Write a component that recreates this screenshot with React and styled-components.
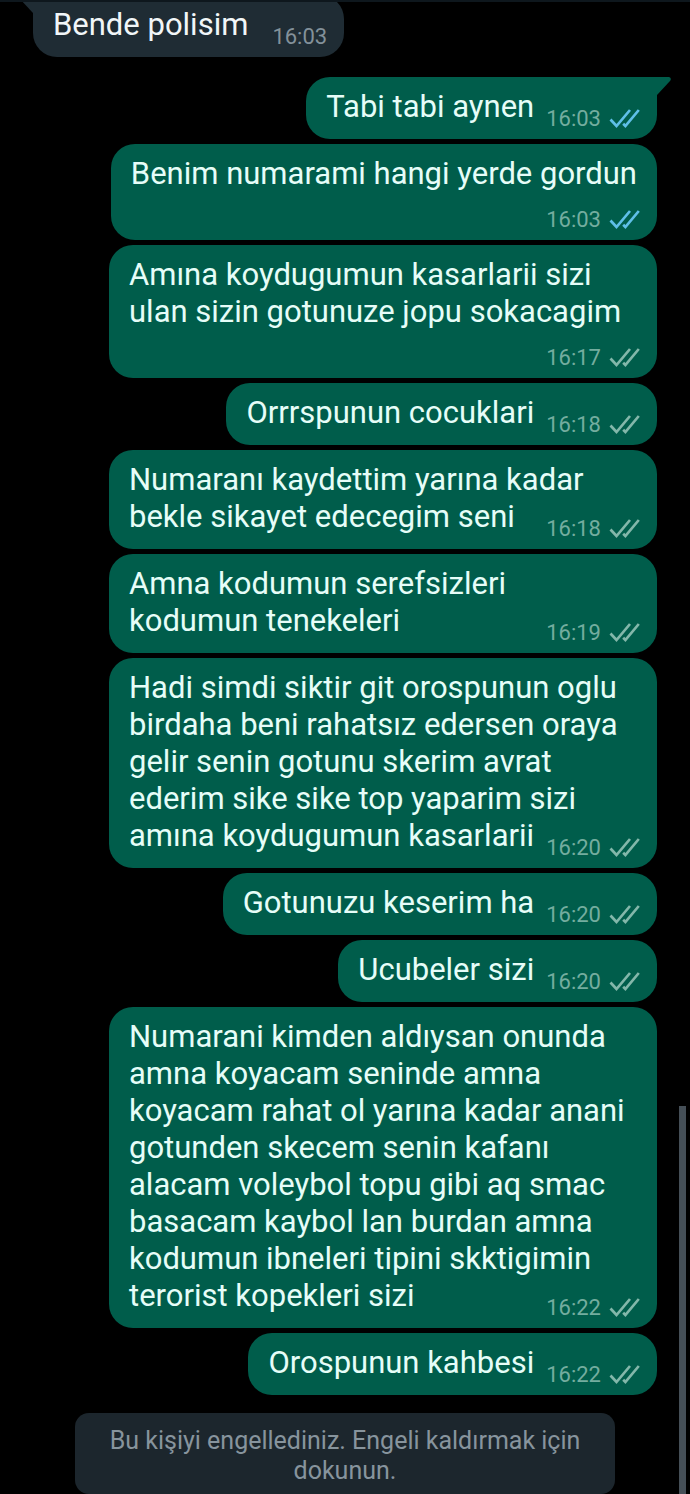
import styled, { createGlobalStyle } from "styled-components";

const GlobalStyle = createGlobalStyle`
  * {
    box-sizing: border-box;
  }
  body {
    margin: 0;
    background: #000;
    font-family: Roboto, "Noto Sans", sans-serif;
  }
`;

const Header = styled.header`
  position: relative;
  z-index: 1;
  height: 2px;
  background: #0e171d;
`;

const Chat = styled.main`
  position: relative;
  overflow: hidden;
`;

const List = styled.ul`
  display: flex;
  flex-direction: column;
  align-items: flex-end;
  gap: 5px;
  list-style: none;
  margin: -7px 0 0;
  padding: 0 33px;
`;

const Bubble = styled.li`
  position: relative;
  display: flow-root;
  max-width: 548px;
  padding: 11px 20px 8px;
  border-radius: 24px;
  background: #005d4b;
  color: #e6fdf8;
  font-size: 31px;
  line-height: 37px;

  ${({ $tail }) => $tail && "border-top-right-radius: 0;"}

  ${({ $incoming }) =>
    $incoming &&
    `
    align-self: flex-start;
    margin-bottom: 15px;
    border-top-left-radius: 0;
    background: #1f2c34;
    color: #f1f6f8;
  `}
`;

const Meta = styled.span`
  display: flex;
  align-items: center;
  gap: 8px;
  height: 24px;
  margin-right: -3px;
  color: ${({ $incoming }) => ($incoming ? "#83919a" : "#74ad9f")};
  font-size: 22px;
  line-height: 24px;

  ${({ $below, $incoming }) =>
    $below
      ? `
    justify-content: flex-end;
    margin-top: 16px;
  `
      : `
    float: right;
    margin-top: 19px;
    margin-left: ${$incoming ? 24 : 12}px;
  `}
`;

const TicksIcon = styled.svg`
  width: 31px;
  height: 24px;
  color: ${({ $read }) => ($read ? "#5fbfe8" : "#83b7aa")};
`;

const Tail = styled.svg`
  position: absolute;
  top: 0;
  width: 14px;
  height: 19px;
  color: ${({ $left }) => ($left ? "#1f2c34" : "#005d4b")};
  ${({ $left }) => ($left ? "right: 100%; transform: scaleX(-1);" : "left: 100%;")}
`;

const BlockedNotice = styled.button`
  display: block;
  width: calc(100% - 150px);
  margin: 18px auto 0;
  padding: 13px 32px 8px;
  border: 0;
  border-radius: 14px;
  background: #1c262d;
  color: #87949d;
  font-family: inherit;
  font-size: 25px;
  line-height: 30px;
  text-align: center;
`;

const ScrollThumb = styled.div`
  position: fixed;
  right: 4px;
  bottom: 0;
  width: 7px;
  height: 26vh;
  background: #454f57;
`;

const messages = [
  { text: "Bende polisim", time: "16:03", incoming: true, tail: true },
  { text: "Tabi tabi aynen", time: "16:03", read: true, tail: true },
  { text: "Benim numarami hangi yerde gordun", time: "16:03", read: true, below: true },
  { text: "Amına koydugumun kasarlarii sizi ulan sizin gotunuze jopu sokacagim", time: "16:17", below: true },
  { text: "Orrrspunun cocuklari", time: "16:18" },
  { text: "Numaranı kaydettim yarına kadar bekle sikayet edecegim seni", time: "16:18" },
  { text: "Amna kodumun serefsizleri kodumun tenekeleri", time: "16:19" },
  {
    text: "Hadi simdi siktir git orospunun oglu birdaha beni rahatsız edersen oraya gelir senin gotunu skerim avrat ederim sike sike top yaparim sizi amına koydugumun kasarlarii",
    time: "16:20",
  },
  { text: "Gotunuzu keserim ha", time: "16:20" },
  { text: "Ucubeler sizi", time: "16:20" },
  {
    text: "Numarani kimden aldıysan onunda amna koyacam seninde amna koyacam rahat ol yarına kadar anani gotunden skecem senin kafanı alacam voleybol topu gibi aq smac basacam kaybol lan burdan amna kodumun ibneleri tipini skktigimin terorist kopekleri sizi",
    time: "16:22",
  },
  { text: "Orospunun kahbesi", time: "16:22" },
];

function Ticks({ read }) {
  return (
    <TicksIcon $read={read} viewBox="0 0 31 24" fill="none" stroke="currentColor" strokeWidth="2.7" aria-hidden="true">
      <path d="M1.5 12.5L7.5 19L21 3" />
      <path d="M14.2 16.8L16.4 19L29.8 3" />
    </TicksIcon>
  );
}

function Message({ text, time, incoming, read, tail, below }) {
  return (
    <Bubble $incoming={incoming} $tail={tail && !incoming}>
      {tail && (
        <Tail $left={incoming} viewBox="0 0 14 19" aria-hidden="true">
          <path d="M0 0H12Q15 1 13 4L0 18Z" fill="currentColor" />
        </Tail>
      )}
      {text}
      <Meta $incoming={incoming} $below={below}>
        <time>{time}</time>
        {!incoming && <Ticks read={read} />}
      </Meta>
    </Bubble>
  );
}

export default function App() {
  return (
    <>
      <GlobalStyle />
      <Header />
      <Chat>
        <List>
          {messages.map((message, index) => (
            <Message key={index} {...message} />
          ))}
        </List>
        <BlockedNotice type="button">
          Bu kişiyi engellediniz. Engeli kaldırmak için dokunun.
        </BlockedNotice>
      </Chat>
      <ScrollThumb />
    </>
  );
}
